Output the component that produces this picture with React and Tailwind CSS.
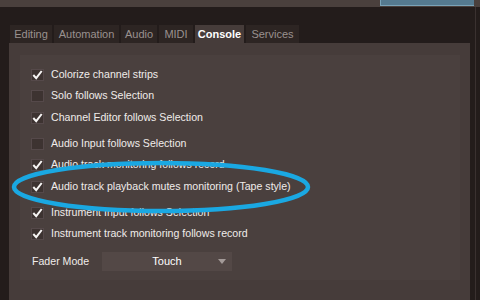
import React from "react";

const tabs = [
  { name: "Editing", w: "w-[42px]" },
  { name: "Automation", w: "w-[65px]" },
  { name: "Audio", w: "w-[36px]" },
  { name: "MIDI", w: "w-[34px]" },
  { name: "Console", w: "w-[49px]", active: true },
  { name: "Services", w: "w-[53px]" },
];

const groups = [
  [
    { label: "Colorize channel strips", checked: true },
    { label: "Solo follows Selection", checked: false },
    { label: "Channel Editor follows Selection", checked: true },
  ],
  [
    { label: "Audio Input follows Selection", checked: false },
    { label: "Audio track monitoring follows record", checked: true },
    { label: "Audio track playback mutes monitoring (Tape style)", checked: true },
  ],
  [
    { label: "Instrument Input follows Selection", checked: true },
    { label: "Instrument track monitoring follows record", checked: true },
  ],
];

const Checkbox = ({ checked }) => (
  <div className="w-[13px] h-[12px] bg-[#3d3331] border border-[#55494a] flex items-center justify-center shrink-0">
    {checked && (
      <svg width="11" height="10" viewBox="0 0 11 10">
        <path d="M1.3 5 L4.2 8.2 L9.7 1" fill="none" stroke="#f7f5f4" strokeWidth="2" />
      </svg>
    )}
  </div>
);

const Row = ({ label, checked }) => (
  <div className="h-[21.5px] flex items-center gap-[7px]">
    <Checkbox checked={checked} />
    <span className="text-[10.6px] text-[#f0ecea] whitespace-nowrap">{label}</span>
  </div>
);

export default function App() {
  return (
    <div className="relative w-[480px] h-[300px] overflow-hidden bg-[#231c1b] font-['Liberation_Sans',Arial,sans-serif]">
      <div className="h-[7px] bg-[#4a403d] flex justify-end pr-[6px]">
        <div className="w-[94px] h-[6px] bg-[#557a90] border-b border-l border-[#7aa3b8]" />
      </div>
      <div className="flex h-[293px]">
        <div className="w-[9px]" />
        <div className="w-[461px] flex flex-col">
          <div className="h-[18px]" />
          <div className="flex h-[18px] gap-[2px] pl-[1px]">
            {tabs.map((t) => (
              <div
                key={t.name}
                className={`${t.w} flex items-center justify-center text-[11px] ${
                  t.active ? "bg-[#463c3a] text-white font-bold" : "bg-[#2d2523] text-[#9a918f]"
                }`}
              >
                {t.name}
              </div>
            ))}
          </div>
          <div className="flex-1 bg-[#463c3a] pl-[11px] pr-[10px] pt-[12px] pb-[20px]">
            <div className="h-full bg-[#4a403e] pl-[11px] pt-[9px]">
              {groups.map((g, i) => (
                <div key={i} className={i > 0 ? "mt-[4.5px]" : ""}>
                  {g.map((r) => (
                    <Row key={r.label} {...r} />
                  ))}
                </div>
              ))}
              <div className="flex items-center mt-[7px] h-[19px]">
                <span className="w-[71px] pl-[1px] text-[10.6px] text-[#f0ecea]">Fader Mode</span>
                <div className="relative w-[130px] h-[19px] bg-[#534846] flex items-center justify-center">
                  <span className="text-[11px] text-white">Touch</span>
                  <svg className="absolute right-[6px] top-[7px]" width="8" height="5" viewBox="0 0 8 5">
                    <path d="M0 0 H8 L4 5 Z" fill="#a39a98" />
                  </svg>
                </div>
              </div>
            </div>
          </div>
        </div>
        <div className="w-[10px] flex">
          <div className="w-[5px]" />
          <div className="w-[1px] bg-[#3a3130]" />
        </div>
      </div>
      <svg className="absolute left-0 top-0 pointer-events-none" width="480" height="300">
        <ellipse cx="161" cy="187" rx="147" ry="24" fill="none" stroke="#1aa8e2" strokeWidth="4.5" />
      </svg>
    </div>
  );
}
